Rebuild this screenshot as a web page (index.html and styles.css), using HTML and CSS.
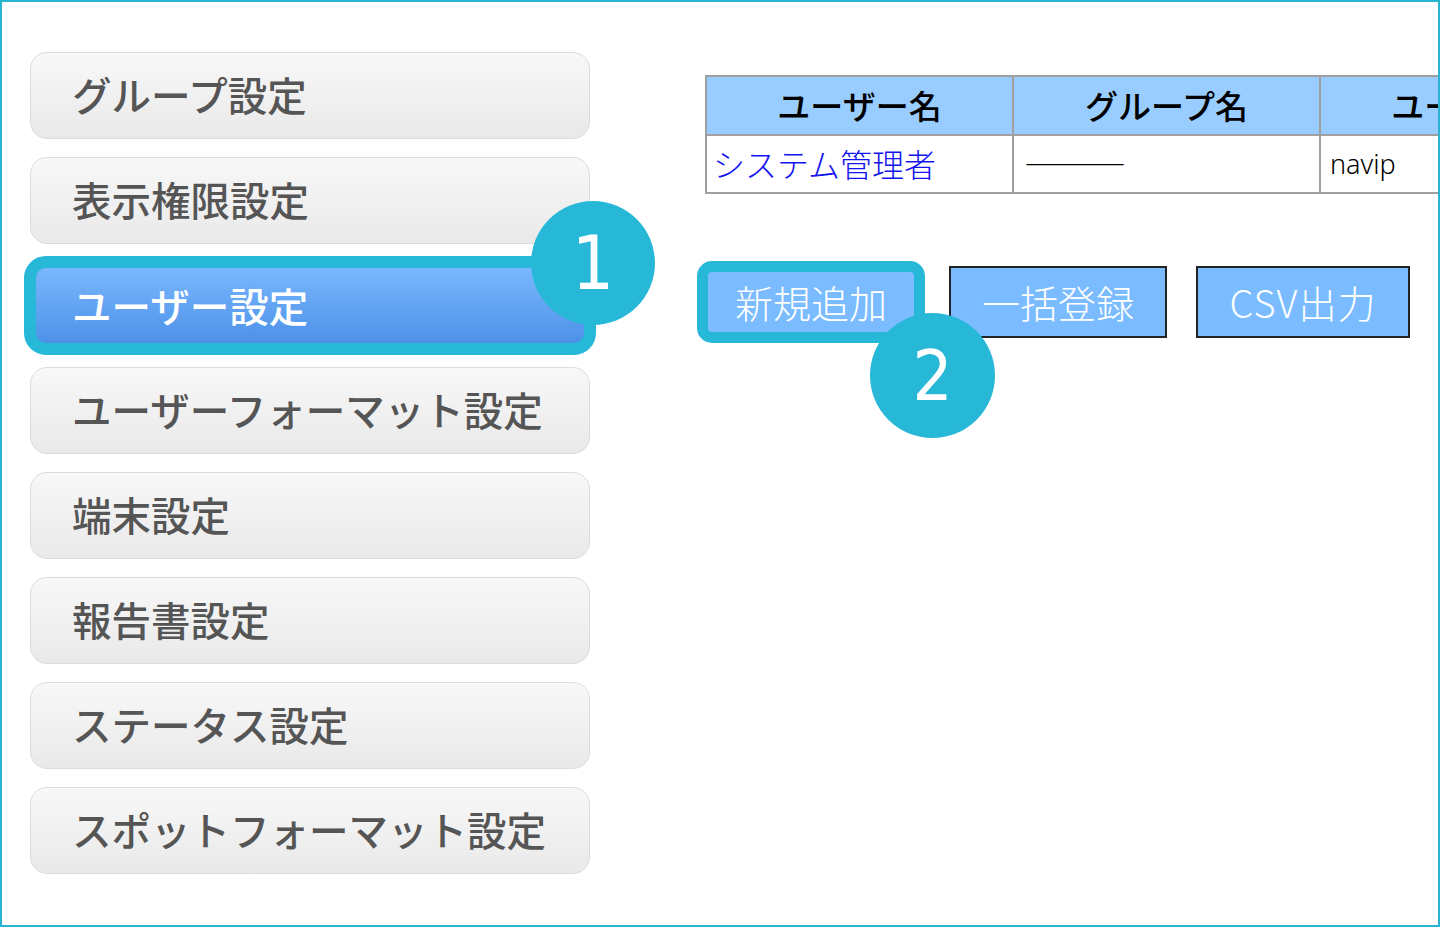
FILE: index.html
```html
<!DOCTYPE html>
<html lang="ja">
<head>
    <meta charset="UTF-8">
    <meta name="viewport" content="width=device-width, initial-scale=1.0">
    <title>ユーザー設定</title>
    <link rel="stylesheet" href="styles.css">
</head>
<body>
    <div class="frame">
        <ul class="sideMenu">
            <li class="menuItem">グループ設定</li>
            <li class="menuItem">表示権限設定</li>
            <li class="menuItem is-active">
                ユーザー設定
                <span class="badge badge-one">1</span>
            </li>
            <li class="menuItem">ユーザーフォーマット設定</li>
            <li class="menuItem">端末設定</li>
            <li class="menuItem">報告書設定</li>
            <li class="menuItem">ステータス設定</li>
            <li class="menuItem">スポットフォーマット設定</li>
        </ul>

        <div class="content">
            <table class="userTable">
                <thead>
                    <tr>
                        <th>ユーザー名</th>
                        <th>グループ名</th>
                        <th>ユーザーID</th>
                    </tr>
                </thead>
                <tbody>
                    <tr>
                        <td><a class="userLink" href="#">システム管理者</a></td>
                        <td class="dash">―――</td>
                        <td class="latin">navip</td>
                    </tr>
                </tbody>
            </table>

            <div class="actions">
                <button class="actionButton is-marked">
                    新規追加
                    <span class="badge badge-two">2</span>
                </button>
                <button class="actionButton">一括登録</button>
                <button class="actionButton csvButton">CSV出力</button>
            </div>
        </div>
    </div>
</body>
</html>
```

FILE: styles.css
```css
body {
    margin: 0;
    background: #fff;
    font-family: "Noto Sans CJK JP", "Noto Sans", sans-serif;
}

.frame {
    width: 1440px;
    height: 927px;
    box-sizing: border-box;
    border: 2px solid #29b5d1;
    overflow: hidden;
    display: flex;
}

.sideMenu {
    list-style: none;
    margin: 0;
    padding: 50px 0 0 28px;
    width: 560px;
    flex: none;
    display: flex;
    flex-direction: column;
    gap: 18px;
}

.menuItem {
    height: 87px;
    box-sizing: border-box;
    display: flex;
    align-items: center;
    padding: 0 0 5px 41px;
    font-size: 39.5px;
    font-weight: 500;
    color: #555;
    background: linear-gradient(#f8f8f8, #e9e9e9);
    border: 1px solid #dcdcdc;
    border-radius: 17px;
}

.menuItem.is-active {
    position: relative;
    color: #fff;
    background: linear-gradient(#7cbaff, #4a8ee6);
    border-color: #4a8ee6;
    outline: 12px solid #27b8d8;
    outline-offset: -6px;
    border-radius: 16px;
    padding-bottom: 2px;
}

.badge {
    position: absolute;
    z-index: 2;
    border-radius: 50%;
    background: #27b8d8;
    color: #fff;
    font-family: "DejaVu Sans Condensed", "DejaVu Sans", sans-serif;
    font-weight: 400;
    display: flex;
    align-items: center;
    justify-content: center;
}

.badge-one {
    left: 500px;
    top: -62px;
    width: 124px;
    height: 124px;
    font-size: 74px;
}

.badge-two {
    left: 166px;
    top: 45px;
    width: 125px;
    height: 125px;
    font-size: 70px;
}

.content {
    margin-left: 115px;
    padding-top: 73px;
    flex: none;
}

.userTable {
    border-collapse: collapse;
    table-layout: fixed;
    width: 921px;
}

.userTable th,
.userTable td {
    border: 2px solid #a0a0a0;
    width: 307px;
}

.userTable th {
    height: 59px;
    box-sizing: border-box;
    background: #99ccff;
    color: #000;
    font-size: 33px;
    font-weight: 500;
    text-align: center;
    padding: 0 0 2px;
}

.userTable td {
    height: 58px;
    box-sizing: border-box;
    font-size: 32px;
    font-weight: 300;
    padding: 0 0 2px 6px;
    color: #000;
}

.userLink {
    color: #1414f0;
    text-decoration: none;
}

.userTable td.dash {
    padding-left: 10px;
    font-size: 34px;
}

.userTable td.latin {
    font-family: "Noto Sans", sans-serif;
    font-size: 27px;
    padding-left: 9px;
}

.actions {
    display: flex;
    gap: 29px;
    margin: 72px 0 0 -3px;
}

.actionButton {
    width: 218px;
    height: 72px;
    padding: 0 0 2px;
    border: 2px solid #222;
    background: #7abcff;
    color: #fff;
    font-family: "Noto Sans CJK JP", "Noto Sans", sans-serif;
    font-size: 38px;
    font-weight: 300;
    cursor: pointer;
}

.csvButton {
    width: 214px;
    letter-spacing: 1px;
}

.actionButton.is-marked {
    position: relative;
    border-color: #7abcff;
    outline: 11px solid #27b8d8;
    outline-offset: -6px;
    border-radius: 10px;
}
```
